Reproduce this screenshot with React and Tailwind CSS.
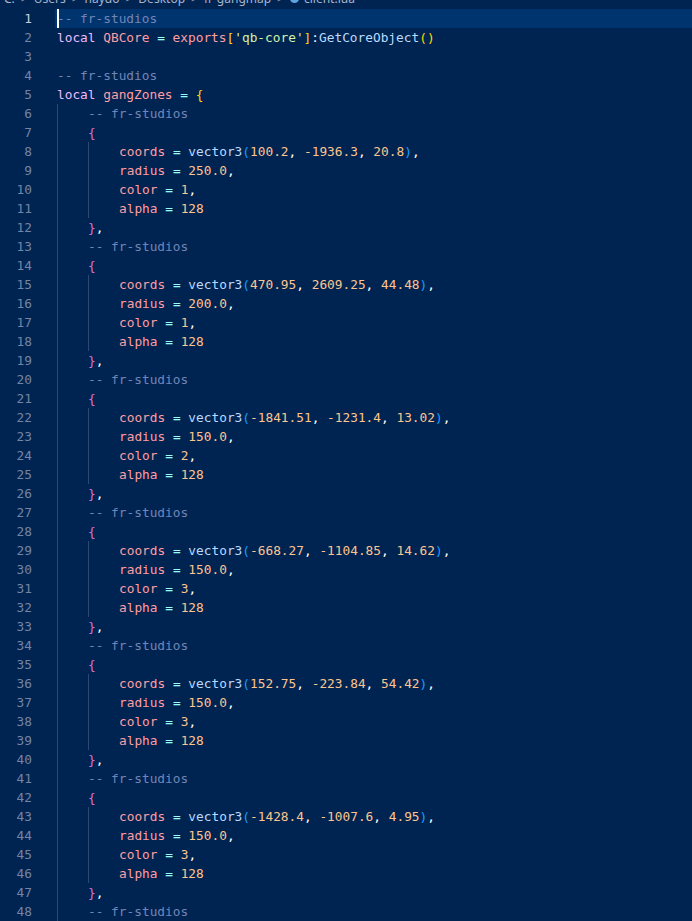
import React from 'react';

const colors = {
  c: 'text-[#7285b7]',
  k: 'text-[#ebbbff]',
  v: 'text-[#ff9da4]',
  o: 'text-[#99ffff]',
  s: 'text-[#d1f1a9]',
  f: 'text-[#bbdaff]',
  n: 'text-[#ffc58f]',
  p: 'text-[#ffffff]',
  b1: 'text-[#ffd700]',
  b2: 'text-[#da70d6]',
  b3: 'text-[#179fff]',
};

const zones = [
  ['100.2', '-1936.3', '20.8', '250.0', '1'],
  ['470.95', '2609.25', '44.48', '200.0', '1'],
  ['-1841.51', '-1231.4', '13.02', '150.0', '2'],
  ['-668.27', '-1104.85', '14.62', '150.0', '3'],
  ['152.75', '-223.84', '54.42', '150.0', '3'],
  ['-1428.4', '-1007.6', '4.95', '150.0', '3'],
];

// each line: [depth, tokens]
const buildLines = () => {
  const lines = [
    [0, [['c', '-- fr-studios']]],
    [0, [['k', 'local '], ['v', 'QBCore'], ['o', ' = '], ['v', 'exports'], ['b1', '['], ['s', "'qb-core'"], ['b1', ']'], ['p', ':'], ['f', 'GetCoreObject'], ['b1', '()']]],
    [0, []],
    [0, [['c', '-- fr-studios']]],
    [0, [['k', 'local '], ['v', 'gangZones'], ['o', ' = '], ['b1', '{']]],
  ];
  zones.forEach(([x, y, z, r, col]) => {
    lines.push([1, [['c', '-- fr-studios']]]);
    lines.push([1, [['b2', '{']]]);
    lines.push([2, [['v', 'coords'], ['o', ' = '], ['f', 'vector3'], ['b3', '('], ['n', x], ['p', ', '], ['n', y], ['p', ', '], ['n', z], ['b3', ')'], ['p', ',']]]);
    lines.push([2, [['v', 'radius'], ['o', ' = '], ['n', r], ['p', ',']]]);
    lines.push([2, [['v', 'color'], ['o', ' = '], ['n', col], ['p', ',']]]);
    lines.push([2, [['v', 'alpha'], ['o', ' = '], ['n', '128']]]);
    lines.push([1, [['b2', '}'], ['p', ',']]]);
  });
  lines.push([1, [['c', '-- fr-studios']]]);
  return lines;
};

const Crumb = ({ children }) => <span className="text-[#aab5cc]">{children}</span>;
const Sep = () => <span className="mx-[6px] text-[#8c99b5]">&gt;</span>;

const App = () => {
  const lines = buildLines();
  return (
    <div className="w-[692px] h-[921px] overflow-hidden bg-[#002451] font-['DejaVu_Sans_Mono',monospace]">
      <div className="mt-[-12px] h-[21px] flex items-center pl-[4px] text-[12px] font-['Noto_Sans',sans-serif] whitespace-nowrap">
        <Crumb>C:</Crumb>
        <Sep />
        <Crumb>Users</Crumb>
        <Sep />
        <Crumb>haydo</Crumb>
        <Sep />
        <Crumb>Desktop</Crumb>
        <Sep />
        <Crumb>fr-gangmap</Crumb>
        <Sep />
        <span className="inline-block w-[9px] h-[9px] rounded-full bg-[#5fa3e0] mr-[5px]" />
        <Crumb>client.lua</Crumb>
      </div>
      <div className="flex flex-col">
        {lines.map(([depth, tokens], i) => {
          const active = i === 0;
          return (
            <div key={i} className="flex h-[19px] leading-[19px] text-[12.8px] whitespace-pre">
              <div className={`w-[32px] text-right ${active ? 'text-[#c6cfdd]' : 'text-[#7484a6]'}`}>{i + 1}</div>
              <div className="w-[23px]" />
              <div className={`relative flex-1 flex ${active ? 'bg-[#00346e]' : ''}`}>
                {active && <span className="absolute left-[2px] top-0 w-[2px] h-[19px] bg-white" />}
                <div className="w-[2px]" />
                {Array.from({ length: depth }).map((_, d) => (
                  <span key={d} className="inline-block w-[31px] h-[19px] border-l border-[#2f4873]" />
                ))}
                <span>
                  {tokens.map(([t, text], j) => (
                    <span key={j} className={colors[t]}>{text}</span>
                  ))}
                </span>
              </div>
            </div>
          );
        })}
      </div>
    </div>
  );
};

export default App;
